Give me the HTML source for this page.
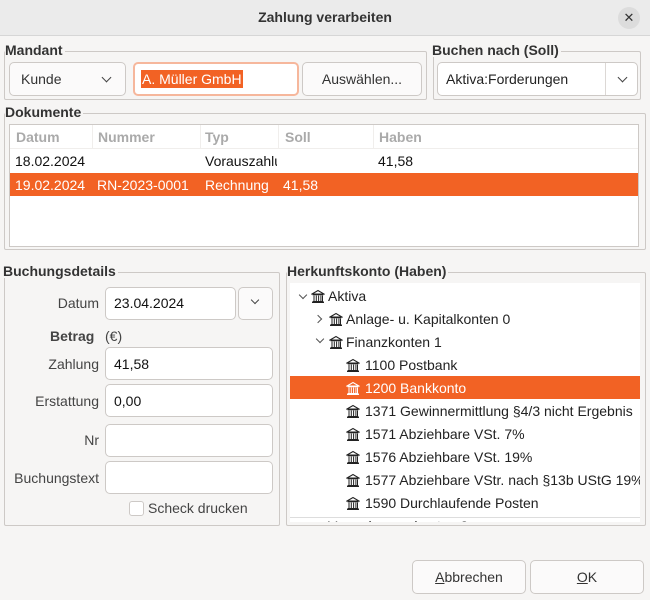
<!DOCTYPE html>
<html><head><meta charset="utf-8"><style>
*{box-sizing:border-box;margin:0;padding:0}
body{width:650px;height:600px;background:#f6f5f4;font-family:"Liberation Sans",sans-serif;font-size:14px;color:#333;position:relative;overflow:hidden}
.a{position:absolute;white-space:nowrap}
.title{left:0;top:0;width:650px;height:36px;background:#ebebeb;border-bottom:1px solid #d6d6d6;text-align:center;line-height:35px;font-weight:bold;font-size:14px;color:#333}
.close{left:618px;top:7px;width:22px;height:22px;border-radius:50%;background:#dcdcdc;text-align:center;line-height:21px;font-size:13px;color:#333}
.frame{border:1px solid #cdc9c6;border-radius:2px}
.lbl{font-weight:bold;background:#f6f5f4;padding-right:2px;color:#333;line-height:14px}
.box{background:#fff;border:1px solid #cdc9c6;border-radius:5px}
.btn{background:#fbfafa;border:1px solid #cdc9c6;border-radius:5px;text-align:center}
.hl{background:#f26224;color:#fff}
.chev{width:7px;height:7px;border-right:1.3px solid #444;border-bottom:1.3px solid #444;transform:rotate(45deg)}
.chr{width:6px;height:6px;border-right:1.2px solid #555;border-bottom:1.2px solid #555;transform:rotate(-45deg)}
.row{line-height:16px}
.fl{text-align:right;width:95px;left:4px;color:#444}
</style></head><body>
<svg width="0" height="0" style="position:absolute"><defs><symbol id="bk" viewBox="0 0 14 14"><path d="M1 5 L7 1.5 L13 5 Z" fill="none" stroke="#222" stroke-width="1.1"/><path d="M1.5 5.8h11M1.5 12.5h11M1 13.5h12" stroke="#222" stroke-width="1"/><path d="M3 6.5v5.5M5.3 6.5v5.5M7.6 6.5v5.5M9.9 6.5v5.5M11.5 6.5v5.5" stroke="#222" stroke-width="1"/></symbol><symbol id="bw" viewBox="0 0 14 14"><path d="M1 5 L7 1.5 L13 5 Z" fill="none" stroke="#fff" stroke-width="1.1"/><path d="M1.5 5.8h11M1.5 12.5h11M1 13.5h12" stroke="#fff" stroke-width="1"/><path d="M3 6.5v5.5M5.3 6.5v5.5M7.6 6.5v5.5M9.9 6.5v5.5M11.5 6.5v5.5" stroke="#fff" stroke-width="1"/></symbol></defs></svg>

<div class="a title">Zahlung verarbeiten</div>
<div class="a close">✕</div>

<!-- Mandant -->
<div class="a frame" style="left:4px;top:51px;width:423px;height:49px"></div>
<div class="a lbl" style="left:5px;top:43px">Mandant</div>
<div class="a btn" style="left:9px;top:62px;width:117px;height:34px"></div>
<div class="a" style="left:21px;top:71px;color:#333">Kunde</div>
<div class="a chev" style="left:103px;top:74px"></div>
<div class="a box" style="left:133px;top:62px;width:166px;height:34px;border:2px solid #f6b79c"></div>
<div class="a hl" style="left:141px;top:70px;height:18px;line-height:18px;padding:0 1px">A. Müller GmbH</div>
<div class="a btn" style="left:302px;top:62px;width:120px;height:34px;line-height:32px">Auswählen...</div>

<div class="a frame" style="left:433px;top:51px;width:208px;height:49px"></div>
<div class="a lbl" style="left:432px;top:43px">Buchen nach (Soll)</div>
<div class="a btn" style="left:437px;top:62px;width:201px;height:34px;background:#fff"></div>
<div class="a" style="left:446px;top:71px;color:#222">Aktiva:Forderungen</div>
<div class="a" style="left:605px;top:63px;width:1px;height:32px;background:#dcd8d5"></div>
<div class="a chev" style="left:619px;top:74px"></div>

<!-- Dokumente -->
<div class="a frame" style="left:4px;top:113px;width:642px;height:137px"></div>
<div class="a lbl" style="left:5px;top:105px">Dokumente</div>
<div class="a" style="left:9px;top:124px;width:630px;height:123px;background:#fff;border:1px solid #cdc9c6"></div>
<div class="a" style="left:10px;top:148px;width:628px;height:1px;background:#f0eeec"></div>
<div class="a" style="left:92px;top:125px;width:1px;height:23px;background:#f0eeec"></div>
<div class="a" style="left:200px;top:125px;width:1px;height:23px;background:#f0eeec"></div>
<div class="a" style="left:278px;top:125px;width:1px;height:23px;background:#f0eeec"></div>
<div class="a" style="left:373px;top:125px;width:1px;height:23px;background:#f0eeec"></div>
<div class="a row" style="left:16px;top:129px;color:#aaa;font-weight:bold">Datum</div>
<div class="a row" style="left:98px;top:129px;color:#aaa;font-weight:bold">Nummer</div>
<div class="a row" style="left:205px;top:129px;color:#aaa;font-weight:bold">Typ</div>
<div class="a row" style="left:285px;top:129px;color:#aaa;font-weight:bold">Soll</div>
<div class="a row" style="left:379px;top:129px;color:#aaa;font-weight:bold">Haben</div>
<div class="a row" style="left:15px;top:153px;color:#111">18.02.2024</div>
<div class="a row" style="left:205px;top:153px;color:#111;width:72px;overflow:hidden">Vorauszahlung</div>
<div class="a row" style="left:378px;top:153px;color:#111">41,58</div>
<div class="a hl" style="left:10px;top:173px;width:628px;height:23px"></div>
<div class="a row" style="left:15px;top:177px;color:#fff">19.02.2024</div>
<div class="a row" style="left:97px;top:177px;color:#fff">RN-2023-0001</div>
<div class="a row" style="left:205px;top:177px;color:#fff">Rechnung</div>
<div class="a row" style="left:283px;top:177px;color:#fff">41,58</div>

<!-- Buchungsdetails -->
<div class="a frame" style="left:4px;top:272px;width:276px;height:254px"></div>
<div class="a lbl" style="left:3px;top:264px">Buchungsdetails</div>
<div class="a fl" style="top:295px">Datum</div>
<div class="a box" style="left:105px;top:287px;width:131px;height:33px"></div>
<div class="a" style="left:114px;top:295px;color:#111">23.04.2024</div>
<div class="a btn" style="left:238px;top:287px;width:35px;height:33px"></div>
<div class="a chev" style="left:252px;top:297px;width:6px;height:6px"></div>
<div class="a" style="left:50px;top:328px;font-weight:bold;color:#444">Betrag</div>
<div class="a" style="left:105px;top:328px;color:#444">(€)</div>
<div class="a fl" style="top:356px">Zahlung</div>
<div class="a box" style="left:105px;top:347px;width:168px;height:33px"></div>
<div class="a" style="left:114px;top:356px;color:#111">41,58</div>
<div class="a fl" style="top:393px">Erstattung</div>
<div class="a box" style="left:105px;top:384px;width:168px;height:33px"></div>
<div class="a" style="left:114px;top:393px;color:#111">0,00</div>
<div class="a fl" style="top:432px">Nr</div>
<div class="a box" style="left:105px;top:424px;width:168px;height:33px"></div>
<div class="a fl" style="top:470px">Buchungstext</div>
<div class="a box" style="left:105px;top:461px;width:168px;height:33px"></div>
<div class="a box" style="left:129px;top:501px;width:15px;height:15px;border-radius:3px"></div>
<div class="a" style="left:148px;top:500px;color:#444">Scheck drucken</div>

<!-- Herkunftskonto -->
<div class="a frame" style="left:286px;top:272px;width:360px;height:254px"></div>
<div class="a lbl" style="left:287px;top:264px">Herkunftskonto (Haben)</div>
<div class="a" style="left:290px;top:283px;width:350px;height:239px;background:#fff;overflow:hidden">
  <div class="a" style="left:10px;top:9px;width:6px;height:6px;border-right:1.2px solid #555;border-bottom:1.2px solid #555;transform:rotate(45deg)"></div>
  <svg class="a" style="left:21px;top:6px" width="14" height="14"><use href="#bk"/></svg>
  <div class="a" style="left:38px;top:5px;color:#222">Aktiva</div>

  <div class="a chr" style="left:25px;top:33px"></div>
  <svg class="a" style="left:39px;top:29px" width="14" height="14"><use href="#bk"/></svg>
  <div class="a" style="left:56px;top:28px;color:#222">Anlage- u. Kapitalkonten 0</div>

  <div class="a" style="left:27px;top:53px;width:6px;height:6px;border-right:1.2px solid #555;border-bottom:1.2px solid #555;transform:rotate(45deg)"></div>
  <svg class="a" style="left:39px;top:52px" width="14" height="14"><use href="#bk"/></svg>
  <div class="a" style="left:56px;top:51px;color:#222">Finanzkonten 1</div>

  <svg class="a" style="left:56px;top:75px" width="14" height="14"><use href="#bk"/></svg>
  <div class="a" style="left:75px;top:74px;color:#222">1100 Postbank</div>

  <div class="a hl" style="left:0;top:93px;width:350px;height:23px"></div>
  <svg class="a" style="left:56px;top:98px" width="14" height="14"><use href="#bw"/></svg>
  <div class="a" style="left:75px;top:97px;color:#fff">1200 Bankkonto</div>

  <svg class="a" style="left:56px;top:121px" width="14" height="14"><use href="#bk"/></svg>
  <div class="a" style="left:75px;top:120px;color:#222">1371 Gewinnermittlung §4/3 nicht Ergebnis</div>
  <svg class="a" style="left:56px;top:144px" width="14" height="14"><use href="#bk"/></svg>
  <div class="a" style="left:75px;top:143px;color:#222">1571 Abziehbare VSt. 7%</div>
  <svg class="a" style="left:56px;top:167px" width="14" height="14"><use href="#bk"/></svg>
  <div class="a" style="left:75px;top:166px;color:#222">1576 Abziehbare VSt. 19%</div>
  <svg class="a" style="left:56px;top:190px" width="14" height="14"><use href="#bk"/></svg>
  <div class="a" style="left:75px;top:189px;color:#222">1577 Abziehbare VStr. nach §13b UStG 19%</div>
  <svg class="a" style="left:56px;top:213px" width="14" height="14"><use href="#bk"/></svg>
  <div class="a" style="left:75px;top:212px;color:#222">1590 Durchlaufende Posten</div>
  <div class="a" style="left:38px;top:235px;color:#222">Verrechnungskonten 2</div>
  <div class="a" style="left:0;top:234px;width:350px;height:1px;background:#ddd"></div>
</div>

<div class="a btn" style="left:412px;top:560px;width:114px;height:34px;line-height:32px"><u>A</u>bbrechen</div>
<div class="a btn" style="left:530px;top:560px;width:114px;height:34px;line-height:32px"><u>O</u>K</div>
</body></html>
